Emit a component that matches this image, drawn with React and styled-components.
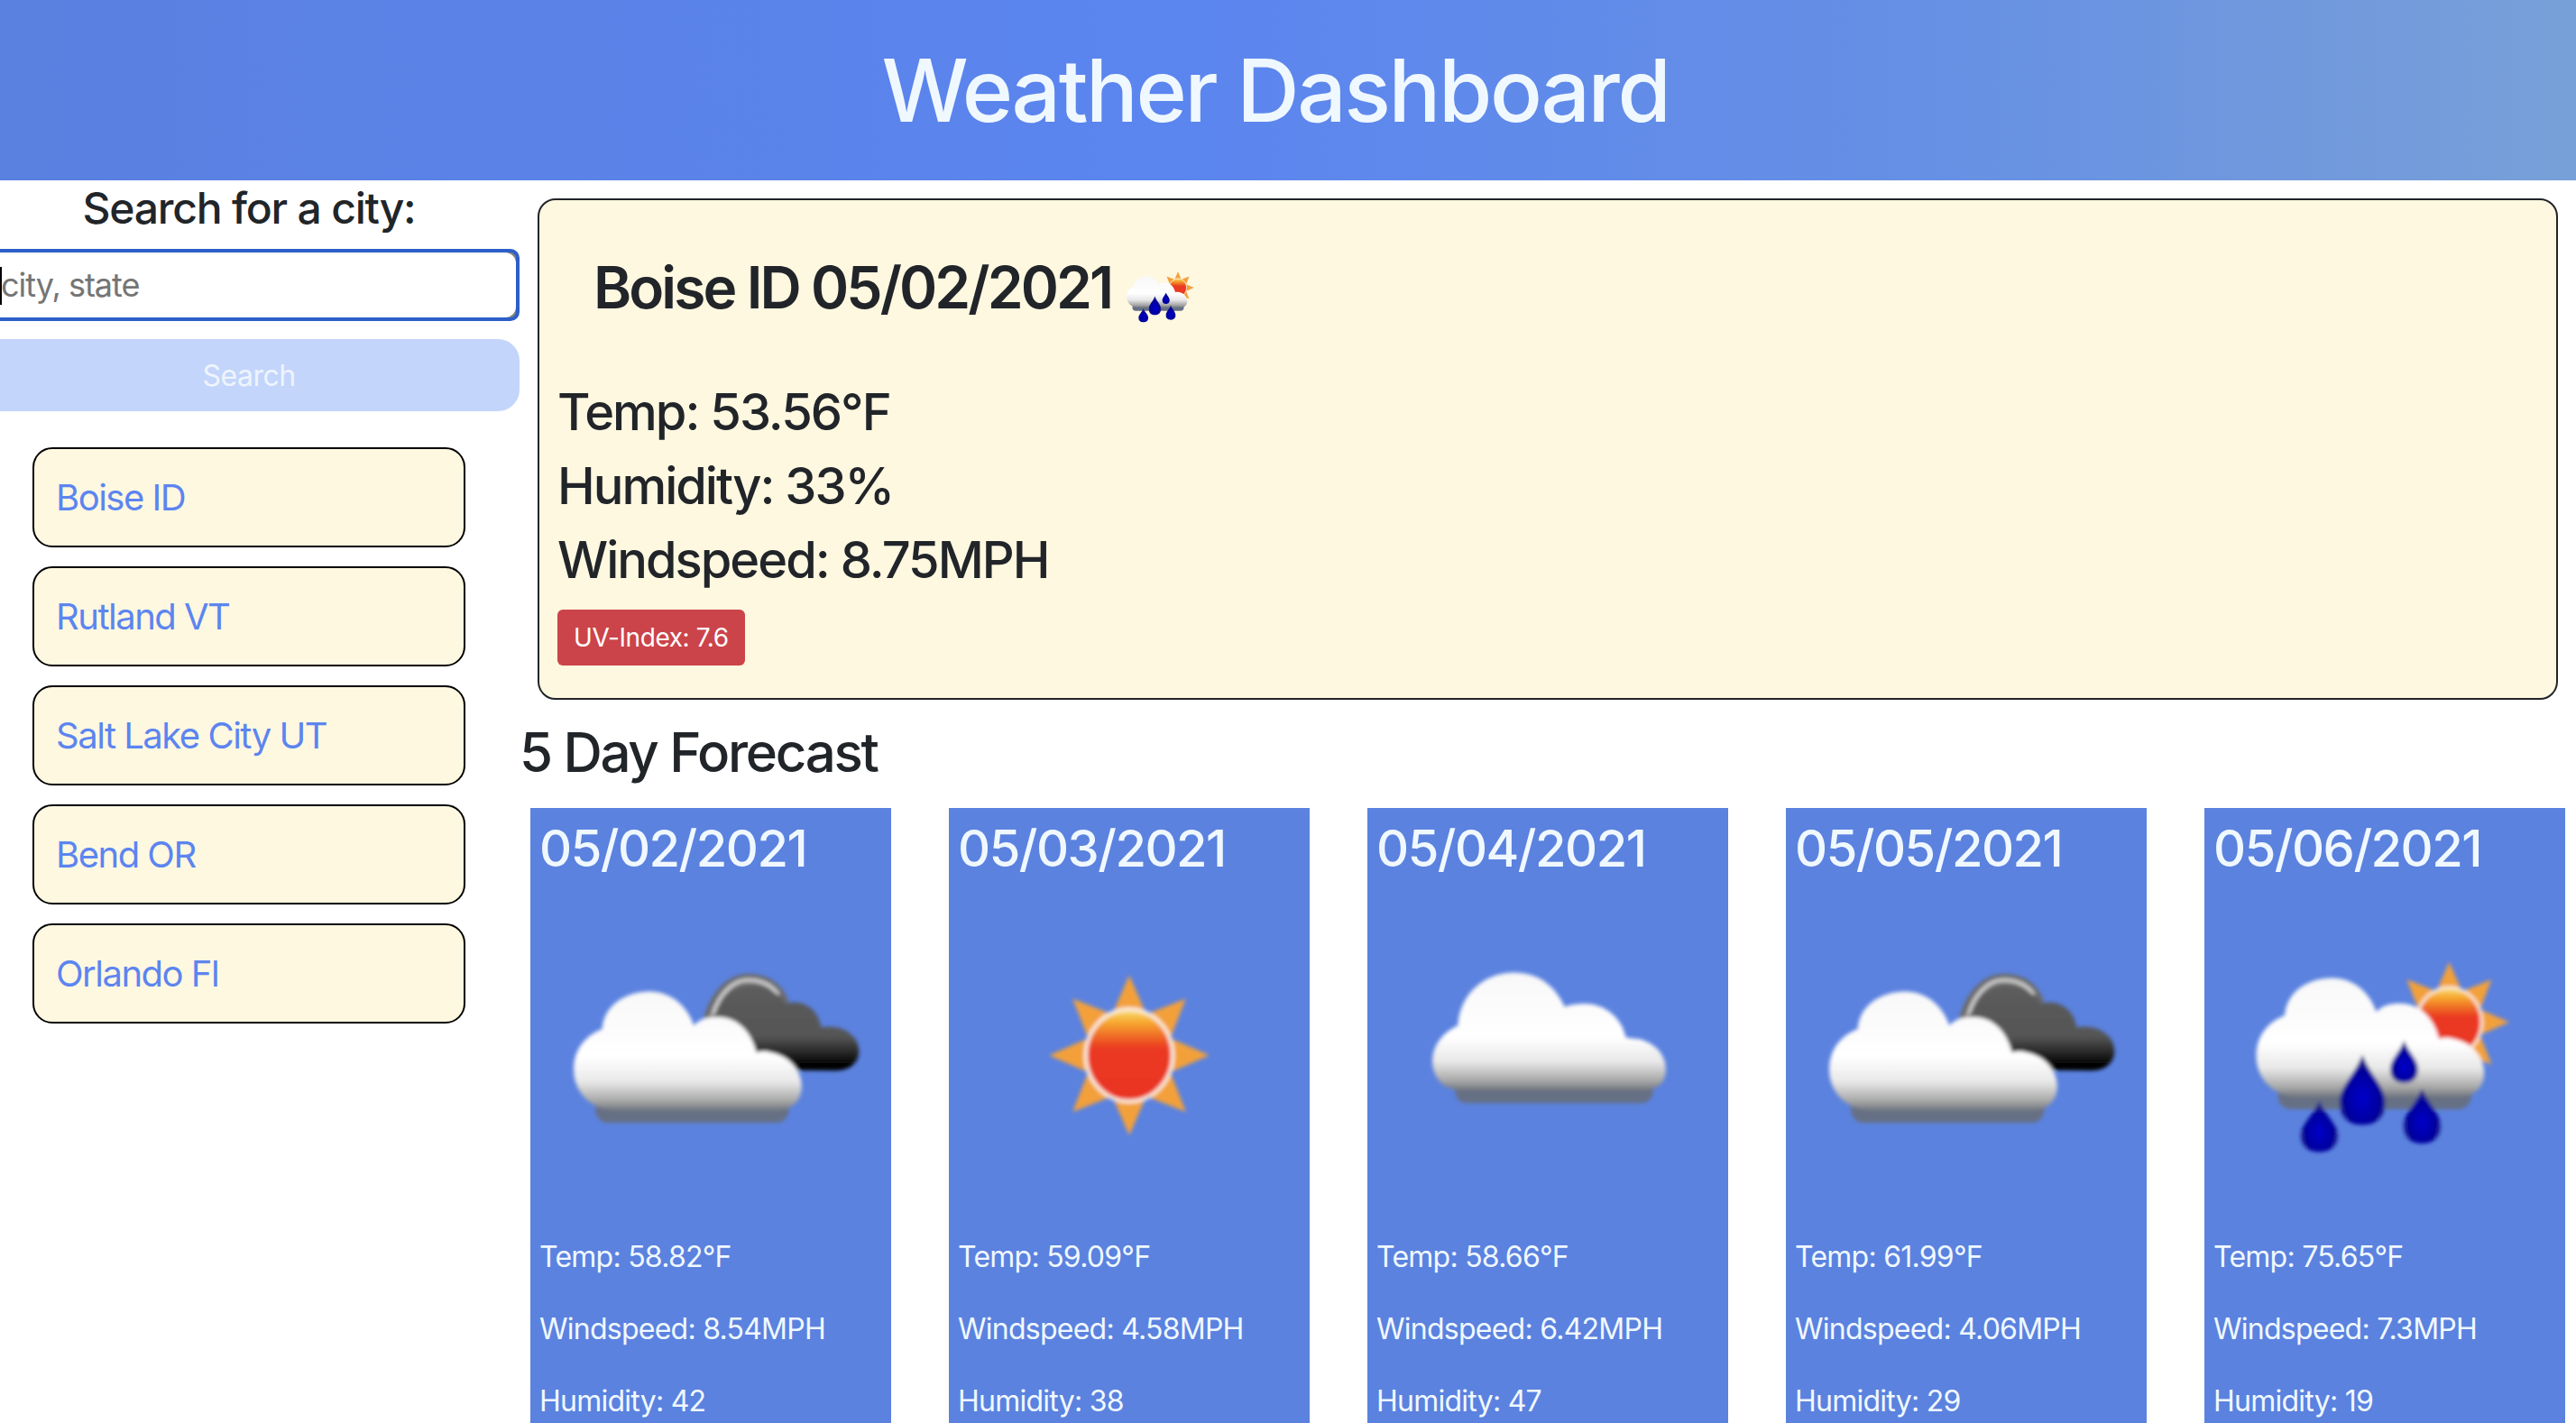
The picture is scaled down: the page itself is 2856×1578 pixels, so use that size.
import React from "react";
import styled, { createGlobalStyle } from "styled-components";

// Data
const cities = ["Boise ID", "Rutland VT", "Salt Lake City UT", "Bend OR", "Orlando Fl"];

const forecast = [
	{ date: "05/02/2021", icon: "brokenClouds", temp: "58.82", wind: "8.54", humidity: 42 },
	{ date: "05/03/2021", icon: "clear", temp: "59.09", wind: "4.58", humidity: 38 },
	{ date: "05/04/2021", icon: "clouds", temp: "58.66", wind: "6.42", humidity: 47 },
	{ date: "05/05/2021", icon: "brokenClouds", temp: "61.99", wind: "4.06", humidity: 29 },
	{ date: "05/06/2021", icon: "rain", temp: "75.65", wind: "7.3", humidity: 19 },
];

// Weather icons, drawn on a 100 x 100 box
const WHITE_CLOUD =
	"M22 66C14 66 9.6 60 9.6 54C9.6 48 13 44 18 42C18.5 35 25 31 32 31C38 31 43 35 45 41C47 39 49 38.5 52 38.5C58 38.5 62 43 63.5 49C65 48.5 66 48.5 68 49C73 50 76.8 54 76.8 59C76.8 63 74 66 70 66Z";
const SINGLE_CLOUD =
	"M24 60C19 60 16 56 16 51.5C16 47 19 43 23.5 41C24 32 31 25.4 40 25.4C47 25.4 52 29 55 35.5C57 34.8 59 34.6 61 34.6C67 34.6 72 39 73 44.5C74 44.8 76 45 77 45C81 46 84.8 49 84.8 54C84.8 58 82 60 79 60Z";
const DARK_CLOUD =
	"M50 54C46 54 46 40 52 37C53 32 57 29.5 62 29.5C66 29.5 70 31 72 34.5C78 33 82 37 82.5 41.5C89 40.5 93.7 44 93.7 48.5C93.7 52 91 54.3 87 54.3Z";
const DARK_CLOUD_CAP = "M47 44C48 33 54 25.8 61 25.8C67 25.8 71 28.5 73 34L60 40Z";

const SUN_RAYS = [0, 45, 90, 135, 180, 225, 270, 315];

const IconDefs = () => (
	<StyledDefs aria-hidden="true">
		<defs>
			<filter id="soft" x="-10%" y="-10%" width="120%" height="120%">
				<feGaussianBlur stdDeviation="0.55" />
			</filter>
			<linearGradient id="cloudFill" x1="0" y1="0" x2="0" y2="1">
				<stop offset="0" stopColor="#f8f8f8" />
				<stop offset="0.55" stopColor="#ffffff" />
				<stop offset="0.76" stopColor="#e8e8e8" />
				<stop offset="0.92" stopColor="#a8a8a8" />
				<stop offset="1" stopColor="#737880" />
			</linearGradient>
			<linearGradient id="darkFill" x1="0" y1="0" x2="0" y2="1">
				<stop offset="0" stopColor="#5c5c5c" />
				<stop offset="0.6" stopColor="#555555" />
				<stop offset="0.92" stopColor="#060606" />
				<stop offset="1" stopColor="#000000" />
			</linearGradient>
			<linearGradient id="sunFill" x1="0" y1="0" x2="0" y2="1">
				<stop offset="0" stopColor="#fbe27a" />
				<stop offset="0.14" stopColor="#f6a92f" />
				<stop offset="0.42" stopColor="#ea3a20" />
				<stop offset="1" stopColor="#ea3420" />
			</linearGradient>
			<radialGradient id="dropFill" cx="0.5" cy="0.62" r="0.5">
				<stop offset="0" stopColor="#0000cc" />
				<stop offset="0.75" stopColor="#00009c" />
				<stop offset="1" stopColor="#1a1a8a" />
			</radialGradient>
		</defs>
	</StyledDefs>
);

const Sun = ({ cx, cy, scale }) => (
	<g transform={`translate(${cx} ${cy}) scale(${scale})`}>
		{SUN_RAYS.map((angle) => (
			<polygon
				key={angle}
				points="-5.5,-11 0,-23.6 5.5,-11"
				fill="#f3a03a"
				transform={`rotate(${angle})`}
			/>
		))}
		<ellipse rx="12.8" ry="13.6" fill="url(#sunFill)" stroke="#fbeee0" strokeWidth="1.1" />
	</g>
);

const Drop = ({ x, top, bottom, halfWidth }) => {
	const height = bottom - top;
	const belly = top + height * 0.68;
	return (
		<path
			fill="url(#dropFill)"
			d={`M${x} ${top}C${x + halfWidth * 0.35} ${top + height * 0.3} ${x + halfWidth} ${top + height * 0.45} ${x + halfWidth} ${belly}C${x + halfWidth} ${bottom - height * 0.08} ${x + halfWidth * 0.5} ${bottom} ${x} ${bottom}C${x - halfWidth * 0.5} ${bottom} ${x - halfWidth} ${bottom - height * 0.08} ${x - halfWidth} ${belly}C${x - halfWidth} ${top + height * 0.45} ${x - halfWidth * 0.35} ${top + height * 0.3} ${x} ${top}Z`}
		/>
	);
};

const CloudBody = ({ dy = 0, dx = 0 }) => (
	<g transform={`translate(${dx} ${dy})`}>
		<rect x="16" y="62" width="57" height="7.7" rx="3.8" fill="#667084" />
		<path d={WHITE_CLOUD} fill="url(#cloudFill)" />
	</g>
);

const WeatherIcon = ({ name, size }) => (
	<StyledIcon $size={size} viewBox="0 0 100 100" role="img" aria-label={name}>
		<g filter="url(#soft)">
			{name === "clear" && <Sun cx={50} cy={49.8} scale={1} />}
			{name === "clouds" && (
				<>
					<rect x="22.7" y="57" width="58.3" height="6.9" rx="3.4" fill="#667084" />
					<path d={SINGLE_CLOUD} fill="url(#cloudFill)" />
				</>
			)}
			{name === "brokenClouds" && (
				<>
					<path d={DARK_CLOUD_CAP} fill="#6a6a6a" />
					<path d="M50 41C51 33 56 27.6 61 27.6C65 27.6 68 29 70 32" fill="none" stroke="#d4d4d4" strokeWidth="1" />
					<path d={DARK_CLOUD} fill="url(#darkFill)" />
					<CloudBody />
				</>
			)}
			{name === "rain" && (
				<>
					<Sun cx={69} cy={40} scale={0.75} />
					<CloudBody dx={2.5} dy={-4} />
					<Drop x={43.4} top={49.6} bottom={70.3} halfWidth={6.7} />
					<Drop x={55.7} top={45.4} bottom={57.9} halfWidth={4.1} />
					<Drop x={30.7} top={63.2} bottom={78.3} halfWidth={5.4} />
					<Drop x={61} top={59.6} bottom={75.8} halfWidth={5.4} />
				</>
			)}
		</g>
	</StyledIcon>
);

const App = () => (
	<>
		<GlobalStyle />
		<IconDefs />
		<StyledPage>
			<StyledHeader>
				<h1>Weather Dashboard</h1>
			</StyledHeader>
			<StyledRow>
				<StyledSidebar>
					<StyledSearchLabel>Search for a city:</StyledSearchLabel>
					<StyledInputFrame>
						<StyledInput type="text" placeholder="city, state" />
					</StyledInputFrame>
					<StyledSearchButton type="button">Search</StyledSearchButton>
					<StyledCityList>
						{cities.map((city) => (
							<StyledCity key={city}>{city}</StyledCity>
						))}
					</StyledCityList>
				</StyledSidebar>
				<StyledMain>
					<StyledCurrent>
						<StyledCurrentTitle>
							<h2>Boise ID 05/02/2021</h2>
							<WeatherIcon name="rain" size={100} />
						</StyledCurrentTitle>
						<StyledStat>Temp: 53.56°F</StyledStat>
						<StyledStat>Humidity: 33%</StyledStat>
						<StyledStat>Windspeed: 8.75MPH</StyledStat>
						<StyledUvBadge>UV-Index: 7.6</StyledUvBadge>
					</StyledCurrent>
					<StyledForecastTitle>5 Day Forecast</StyledForecastTitle>
					<StyledForecast>
						{forecast.map((day) => (
							<StyledDay key={day.date}>
								<h3>{day.date}</h3>
								<WeatherIcon name={day.icon} size={376} />
								<p>Temp: {day.temp}°F</p>
								<p>Windspeed: {day.wind}MPH</p>
								<p>Humidity: {day.humidity}</p>
							</StyledDay>
						))}
					</StyledForecast>
				</StyledMain>
			</StyledRow>
		</StyledPage>
	</>
);

const GlobalStyle = createGlobalStyle`
	html, body {
		margin: 0;
		height: 100%;
		overflow: hidden;
		background: white;
	}
	body {
		font-family: "Inter", "Liberation Sans", sans-serif;
		color: #212529;
	}
`;

const StyledDefs = styled.svg`
	position: absolute;
	width: 0;
	height: 0;
`;

const StyledIcon = styled.svg`
	display: block;
	flex: none;
	width: ${(props) => props.$size}px;
	height: ${(props) => props.$size}px;
`;

const StyledPage = styled.div`
	height: 1578px;
	overflow: hidden;
`;

const StyledHeader = styled.header`
	height: 200px;
	display: flex;
	align-items: center;
	justify-content: center;
	padding-right: 28px;
	background: linear-gradient(90deg, #5a80e0 0%, #5b85ef 45%, #6690e4 75%, #78a0d8 100%);
	h1 {
		margin: 0;
		font-size: 96px;
		font-weight: 500;
		letter-spacing: -2.4px;
		color: aliceblue;
	}
`;

const StyledRow = styled.div`
	display: flex;
	align-items: flex-start;
`;

const StyledSidebar = styled.aside`
	flex: none;
	width: 600px;
	margin-left: -24px;
	display: flex;
	flex-direction: column;
	align-items: center;
`;

const StyledSearchLabel = styled.h4`
	margin: 0;
	height: 76px;
	line-height: 62px;
	font-size: 48px;
	font-weight: 500;
	letter-spacing: -1.2px;
`;

const StyledInputFrame = styled.div`
	position: relative;
	box-sizing: border-box;
	width: 100%;
	height: 80px;
	border: 4px solid #2c5fc9;
	border-radius: 10px;
	background: #808080;
	&::after {
		content: "";
		position: absolute;
		left: 20px;
		top: 16px;
		width: 2px;
		height: 42px;
		background: black;
	}
`;

const StyledInput = styled.input`
	display: block;
	box-sizing: border-box;
	width: 100%;
	height: 100%;
	padding: 0 0 0 21px;
	border: none;
	border-radius: 12px;
	outline: none;
	background: white;
	font-family: inherit;
	font-size: 36px;
	letter-spacing: -1px;
	&::placeholder {
		color: #757575;
		opacity: 1;
	}
`;

const StyledSearchButton = styled.button`
	width: 100%;
	height: 80px;
	margin-top: 20px;
	border: none;
	border-radius: 24px;
	background: #c3d5fb;
	color: #eff4fe;
	font-family: inherit;
	font-size: 32px;
	letter-spacing: -0.5px;
`;

const StyledCityList = styled.div`
	display: flex;
	flex-direction: column;
	gap: 21px;
	margin-top: 40px;
`;

const StyledCity = styled.div`
	box-sizing: border-box;
	width: 480px;
	height: 111px;
	display: flex;
	align-items: center;
	padding: 0 24px;
	border: 2px solid black;
	border-radius: 22px;
	background: #fff8e0;
	color: #5c85f0;
	font-size: 40px;
	letter-spacing: -1.5px;
`;

const StyledMain = styled.main`
	flex: 1;
	min-width: 0;
`;

const StyledCurrent = styled.section`
	box-sizing: border-box;
	height: 556px;
	margin: 20px 20px 0 20px;
	padding: 0 20px;
	border: 2px solid #212529;
	border-radius: 20px;
	background: #fff8e0;
`;

const StyledCurrentTitle = styled.div`
	display: flex;
	align-items: center;
	height: 202px;
	padding: 0 0 0 40px;
	h2 {
		margin: 0 5px 10px 0;
		font-size: 64px;
		font-weight: 600;
		letter-spacing: -2.9px;
	}
	svg {
		margin-top: 12px;
	}
`;

const StyledStat = styled.p`
	margin: 0 0 16px;
	font-size: 56px;
	font-weight: 450;
	line-height: 66px;
	letter-spacing: -2px;
`;

const StyledUvBadge = styled.span`
	display: inline-flex;
	align-items: center;
	height: 62px;
	margin-top: 6px;
	padding: 0 18px;
	border-radius: 6px;
	background: #cb444a;
	color: white;
	font-size: 28px;
	letter-spacing: -0.4px;
`;

const StyledForecastTitle = styled.h3`
	margin: 24px 0 0;
	height: 96px;
	font-size: 60px;
	font-weight: 500;
	line-height: 68px;
	letter-spacing: -2.3px;
`;

const StyledForecast = styled.div`
	display: flex;
	gap: 64px;
	margin-left: 12px;
`;

const StyledDay = styled.article`
	flex: none;
	box-sizing: border-box;
	width: 400px;
	padding: 12px 10px 0;
	background: #5b82df;
	color: aliceblue;
	h3 {
		margin: 0 0 8px;
		font-size: 56px;
		font-weight: 450;
		line-height: 67px;
		letter-spacing: -1.5px;
	}
	p {
		margin: 0 0 32px;
		font-size: 32px;
		line-height: 48px;
		letter-spacing: -0.75px;
	}
	svg {
		margin: 0 2px 11px;
	}
`;

export default App;
